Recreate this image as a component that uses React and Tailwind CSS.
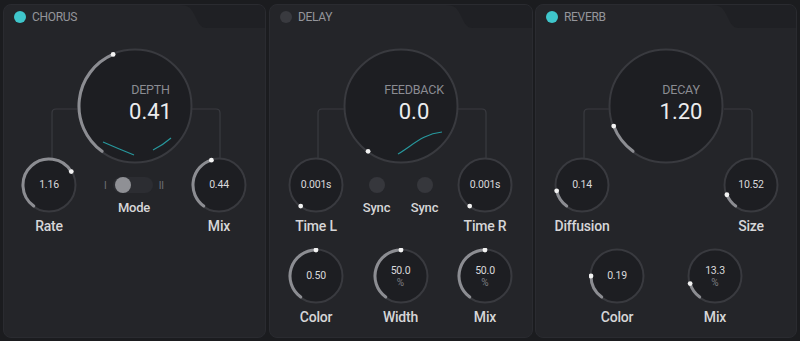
import React from 'react';

const START = -144;

function polar(c, rad, a) {
  const t = (a * Math.PI) / 180;
  return [c + rad * Math.sin(t), c - rad * Math.cos(t)];
}

function Knob({ size, end, arc = true, children, curve }) {
  const c = size / 2;
  const ar = c - 2;
  const [sx, sy] = polar(c, ar, START);
  const [ex, ey] = polar(c, ar, end);
  const large = end - START > 180 ? 1 : 0;

  return (
    <div className="relative shrink-0" style={{ width: size, height: size }}>
      <svg width={size} height={size} className="absolute inset-0">
        <circle cx={c} cy={c} r={c - 1.5} fill="#1d1e22" stroke="#393a3f" strokeWidth="2" />
        {arc && end > START && (
          <path
            d={`M${sx},${sy} A${ar},${ar} 0 ${large} 1 ${ex},${ey}`}
            fill="none"
            stroke="#8c8d92"
            strokeWidth="3"
            strokeLinecap="round"
          />
        )}
        {curve}
        <circle cx={ex} cy={ey} r="2.4" fill="#f2f2f2" />
      </svg>
      <div className="absolute inset-0 flex flex-col items-center justify-center">{children}</div>
    </div>
  );
}

function SmallKnob({ value, unit, end, arc }) {
  return (
    <Knob size={56} end={end} arc={arc}>
      <span className="text-[10.5px] leading-[12px] tracking-[-0.2px] text-[#d9d9db]">{value}</span>
      {unit && <span className="text-[10px] leading-[11px] text-[#7d7e83]">{unit}</span>}
    </Knob>
  );
}

function BigKnob({ label, value, end, arc, curve, shift }) {
  return (
    <Knob size={116} end={end} arc={arc} curve={curve}>
      <div className={`flex flex-col items-center pb-[6px] ${shift}`}>
        <span className="text-[12.5px] leading-[14px] tracking-[-0.2px] text-[#8b8c92]">{label}</span>
        <span className="mt-[3px] text-[22px] leading-[24px] text-[#ececee]">{value}</span>
      </div>
    </Knob>
  );
}

function Labeled({ children, label }) {
  return (
    <div className="flex flex-col items-center">
      {children}
      <span className="mt-[5px] text-[14px] leading-[16px] font-medium tracking-[-0.2px] text-[#d6d6d8]">{label}</span>
    </div>
  );
}

function Header({ title, active, width }) {
  return (
    <>
      <svg width={width} height="24" className="absolute left-0 top-0">
        <path
          d={`M176,0 C184,0 187,3 190,9 L194,17 C197,22 199,23 205,23 H${width} V0 Z`}
          fill="#1f2024"
        />
      </svg>
      <div className="relative flex h-[23px] items-center pl-[10px] pt-[1px]">
        <span className={`h-[12px] w-[12px] rounded-full ${active ? 'bg-[#3fc6cb]' : 'bg-[#393a3f]'}`} />
        <span className="ml-[6px] text-[12px] tracking-[-0.3px] text-[#94959b]">{title}</span>
      </div>
    </>
  );
}

function Connectors() {
  return (
    <svg width="264" height="170" className="absolute left-0 top-0 pointer-events-none">
      <path d="M76,104 H52 Q48,104 48,108 V160" fill="none" stroke="#3a3b40" strokeWidth="1.2" />
      <path d="M188,104 H212 Q216,104 216,108 V160" fill="none" stroke="#3a3b40" strokeWidth="1.2" />
    </svg>
  );
}

function Chorus() {
  return (
    <div className="relative h-[334px] w-[263px] overflow-hidden rounded-[8px] border border-[#2a2b30] bg-[#242529]">
      <Header title="CHORUS" active width={263} />
      <Connectors />
      <div className="relative mt-[20px] flex justify-center">
        <BigKnob
          label="DEPTH"
          value="0.41"
          end={-23}
          shift="pl-[32px]"
          curve={
            <g fill="none" stroke="#27979c" strokeWidth="1.2">
              <path d="M26,94 Q42,101 57,107" />
              <path d="M76,102 Q86,97 94,90" />
            </g>
          }
        />
      </div>
      <div className="relative -mt-[7px] flex justify-between pl-[17px] pr-[18px]">
        <Labeled label="Rate">
          <SmallKnob value="1.16" end={59} />
        </Labeled>
        <div className="flex flex-col items-center pt-[20px]">
          <div className="flex items-center gap-[6px]">
            <span className="text-[10px] text-[#6f7075]">I</span>
            <div className="flex h-[16px] w-[40px] items-center rounded-full bg-[#2c2d32]">
              <span className="ml-[2px] h-[16px] w-[16px] rounded-full bg-[#8f9095]" />
            </div>
            <span className="text-[10px] text-[#6f7075]">II</span>
          </div>
          <span className="mt-[8px] text-[13px] leading-[14px] font-medium tracking-[-0.2px] text-[#d6d6d8]">Mode</span>
        </div>
        <Labeled label="Mix">
          <SmallKnob value="0.44" end={-17} />
        </Labeled>
      </div>
    </div>
  );
}

function Delay() {
  return (
    <div className="relative ml-[3px] h-[334px] w-[264px] overflow-hidden rounded-[8px] border border-[#2a2b30] bg-[#242529]">
      <Header title="DELAY" width={264} />
      <Connectors />
      <div className="relative mt-[20px] flex justify-center">
        <BigKnob
          label="FEEDBACK"
          value="0.0"
          end={START}
          arc={false}
          shift="pl-[26px]"
          curve={
            <path d="M55,106 C70,97 80,86 99,84" fill="none" stroke="#27979c" strokeWidth="1.2" />
          }
        />
      </div>
      <div className="relative -mt-[7px] flex justify-between pl-[18px] pr-[19px]">
        <Labeled label="Time L">
          <SmallKnob value="0.001s" end={START} arc={false} />
        </Labeled>
        <div className="flex gap-[18px] pt-[20px]">
          {['a', 'b'].map((k) => (
            <div key={k} className="flex w-[30px] flex-col items-center">
              <span className="h-[16px] w-[16px] rounded-full bg-[#36373c]" />
              <span className="mt-[8px] text-[13px] leading-[14px] font-medium tracking-[-0.2px] text-[#d6d6d8]">Sync</span>
            </div>
          ))}
        </div>
        <Labeled label="Time R">
          <SmallKnob value="0.001s" end={START} arc={false} />
        </Labeled>
      </div>
      <div className="mt-[14px] flex justify-between pl-[18px] pr-[19px]">
        <Labeled label="Color">
          <SmallKnob value="0.50" end={0} />
        </Labeled>
        <Labeled label="Width">
          <SmallKnob value="50.0" unit="%" end={0} />
        </Labeled>
        <Labeled label="Mix">
          <SmallKnob value="50.0" unit="%" end={0} />
        </Labeled>
      </div>
    </div>
  );
}

function Reverb() {
  return (
    <div className="relative ml-[2px] h-[334px] w-[262px] overflow-hidden rounded-[8px] border border-[#2a2b30] bg-[#242529]">
      <Header title="REVERB" active width={262} />
      <Connectors />
      <div className="relative mt-[20px] flex justify-center">
        <BigKnob label="DECAY" value="1.20" end={-111} shift="pl-[30px]" />
      </div>
      <div className="relative -mt-[7px] flex justify-between pl-[18px] pr-[17px]">
        <Labeled label="Diffusion">
          <SmallKnob value="0.14" end={-103} />
        </Labeled>
        <Labeled label="Size">
          <SmallKnob value="10.52" end={-112} />
        </Labeled>
      </div>
      <div className="mt-[14px] flex justify-center gap-[42px]">
        <Labeled label="Color">
          <SmallKnob value="0.19" end={-90} />
        </Labeled>
        <Labeled label="Mix">
          <SmallKnob value="13.3" unit="%" end={-107} />
        </Labeled>
      </div>
    </div>
  );
}

export default function App() {
  return (
    <div className="flex h-[341px] w-[800px] bg-[#1b1c1f] pl-[3px] pt-[4px] font-['Roboto',sans-serif]">
      <Chorus />
      <Delay />
      <Reverb />
    </div>
  );
}
